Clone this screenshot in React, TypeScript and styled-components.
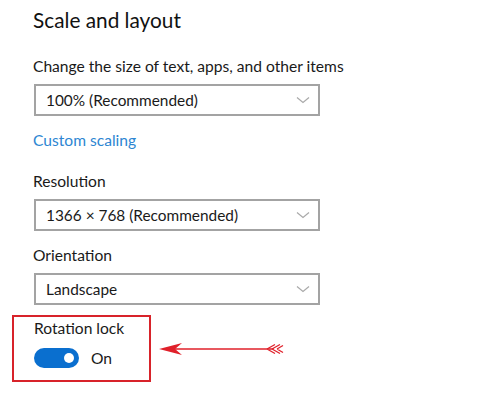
import React from "react";
import styled, { createGlobalStyle } from "styled-components";

const GlobalStyle = createGlobalStyle`
  html, body {
    margin: 0;
    padding: 0;
    background: #ffffff;
  }
  body {
    font-family: Lato, "Noto Sans", sans-serif;
    color: #1f1f1f;
  }
`;

const Page = styled.div`
  width: 500px;
  height: 400px;
  box-sizing: border-box;
  padding: 6px 0 0 33px;
  display: flex;
  flex-direction: column;
  overflow: hidden;
`;

const Title = styled.h1`
  margin: 0;
  font-size: 20.8px;
  font-weight: 400;
  line-height: 28px;
  color: #111;
`;

const Label = styled.div<{ $top: number }>`
  margin-top: ${(p) => p.$top}px;
  font-size: 15.6px;
  line-height: 20px;
  color: #1a1a1a;
`;

const Select = styled.div`
  margin-top: 8px;
  margin-left: 1px;
  width: 286px;
  height: 32px;
  box-sizing: border-box;
  border: 2px solid #a3a3a3;
  display: flex;
  align-items: center;
  justify-content: space-between;
  padding: 0 8px 0 10px;
  font-size: 15.4px;
  color: #1a1a1a;
`;

const Link = styled.div`
  margin-top: 14px;
  font-size: 15.6px;
  line-height: 20px;
  color: #2d86d2;
`;

const AnnotRow = styled.div`
  margin-top: 10px;
  margin-left: -21px;
  display: flex;
  align-items: center;
  gap: 7px;
`;

const RedBox = styled.div`
  width: 139px;
  height: 67px;
  box-sizing: border-box;
  border: 2px solid #d8232a;
  padding: 1px 0 0 20px;
  display: flex;
  flex-direction: column;
`;

const ToggleRow = styled.div`
  margin-top: 10px;
  display: flex;
  align-items: center;
  gap: 12px;
  font-size: 15.6px;
  color: #1a1a1a;
`;

const Switch = styled.div<{ $on: boolean }>`
  width: 45px;
  height: 20px;
  border-radius: 10px;
  background: ${(p) => (p.$on ? "#0a6fcf" : "#ffffff")};
  display: flex;
  align-items: center;
  justify-content: ${(p) => (p.$on ? "flex-end" : "flex-start")};
  padding: 0 5px;
  box-sizing: border-box;
`;

const Thumb = styled.span`
  width: 10px;
  height: 10px;
  border-radius: 50%;
  background: #ffffff;
`;

const Chevron = () => (
  <svg width="14" height="8" viewBox="0 0 14 8">
    <path d="M1 1.5 L7 6.5 L13 1.5" fill="none" stroke="#a9a9a9" strokeWidth="1.2" />
  </svg>
);

const Arrow = () => (
  <svg width="126" height="20" viewBox="0 0 126 20">
    <line x1="12" y1="10" x2="116" y2="10" stroke="#e0202a" strokeWidth="1.6" />
    <path d="M1 10 L24 4 L17 10 L24 16 Z" fill="#e0202a" />
    <path d="M109 10 L117 5.5 M109 10 L117 14.5 M114 10 L122 5.5 M114 10 L122 14.5 M119 10 L125 6.5 M119 10 L125 13.5" fill="none" stroke="#e0202a" strokeWidth="1.3" />
  </svg>
);

const Dropdown = ({ value }: { value: string }) => (
  <Select>
    <span>{value}</span>
    <Chevron />
  </Select>
);

export default function App() {
  return (
    <>
      <GlobalStyle />
      <Page>
        <Title>Scale and layout</Title>
        <Label $top={22}>Change the size of text, apps, and other items</Label>
        <Dropdown value="100% (Recommended)" />
        <Link>Custom scaling</Link>
        <Label $top={21}>Resolution</Label>
        <Dropdown value="1366 × 768 (Recommended)" />
        <Label $top={14}>Orientation</Label>
        <Dropdown value="Landscape" />
        <AnnotRow>
          <RedBox>
            <Label $top={0}>Rotation lock</Label>
            <ToggleRow>
              <Switch $on>
                <Thumb />
              </Switch>
              <span>On</span>
            </ToggleRow>
          </RedBox>
          <Arrow />
        </AnnotRow>
      </Page>
    </>
  );
}
